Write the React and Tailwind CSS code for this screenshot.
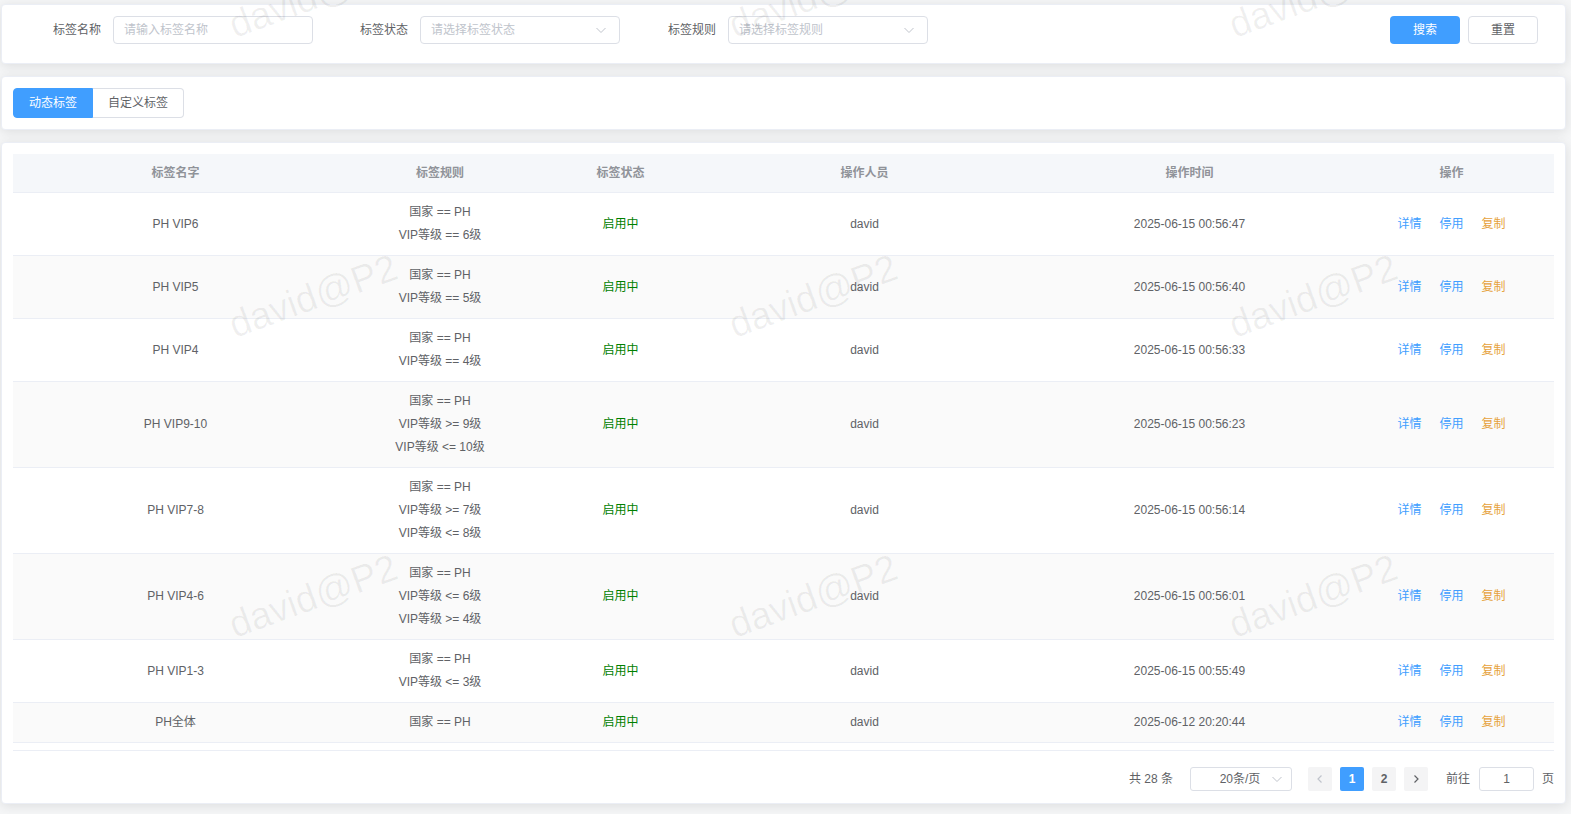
import { useState } from "react";

// =======================================================
// TAG LIST PAGE
// =======================================================

const rows = [
  { name: "PH VIP6", rules: ["国家 == PH", "VIP等级 == 6级"], time: "2025-06-15 00:56:47" },
  { name: "PH VIP5", rules: ["国家 == PH", "VIP等级 == 5级"], time: "2025-06-15 00:56:40" },
  { name: "PH VIP4", rules: ["国家 == PH", "VIP等级 == 4级"], time: "2025-06-15 00:56:33" },
  { name: "PH VIP9-10", rules: ["国家 == PH", "VIP等级 >= 9级", "VIP等级 <= 10级"], time: "2025-06-15 00:56:23" },
  { name: "PH VIP7-8", rules: ["国家 == PH", "VIP等级 >= 7级", "VIP等级 <= 8级"], time: "2025-06-15 00:56:14" },
  { name: "PH VIP4-6", rules: ["国家 == PH", "VIP等级 <= 6级", "VIP等级 >= 4级"], time: "2025-06-15 00:56:01" },
  { name: "PH VIP1-3", rules: ["国家 == PH", "VIP等级 <= 3级"], time: "2025-06-15 00:55:49" },
  { name: "PH全体", rules: ["国家 == PH"], time: "2025-06-12 20:20:44" },
];

const cols = "grid grid-cols-[325px_204px_157px_331px_319px_1fr]";

function ChevronDown({ className = "" }) {
  return (
    <svg width="12" height="12" viewBox="0 0 12 12" className={className} fill="none">
      <path d="M1.5 4 L6 8.5 L10.5 4" stroke="currentColor" strokeWidth="1" />
    </svg>
  );
}

function ChevronSide({ left, className = "" }) {
  return (
    <svg width="10" height="10" viewBox="0 0 10 10" className={className} fill="none">
      <path d={left ? "M6.5 1.5 L3 5 L6.5 8.5" : "M3.5 1.5 L7 5 L3.5 8.5"} stroke="currentColor" strokeWidth="1.2" />
    </svg>
  );
}

function Card({ className = "", children }) {
  return (
    <div className={"bg-white border border-[#ebeef5] rounded-[4px] shadow-[0_2px_12px_0_rgba(0,0,0,0.1)] " + className}>
      {children}
    </div>
  );
}

function Watermark() {
  const marks = [];
  [-4, 296, 596].forEach((y) => {
    [313, 813, 1313].forEach((x) => marks.push({ x, y }));
  });
  return (
    <div className="absolute inset-0 overflow-hidden pointer-events-none z-10">
      {marks.map((m, i) => (
        <div
          key={i}
          className="absolute -translate-x-1/2 -translate-y-1/2 -rotate-[20deg] text-[38px] leading-none whitespace-nowrap text-[rgba(0,0,0,0.06)]"
          style={{ left: m.x, top: m.y }}
        >
          david@P2
        </div>
      ))}
    </div>
  );
}

export default function App() {
  const [tab, setTab] = useState("dynamic");

  return (
    <div className="relative min-h-screen bg-[#f5f6f7] font-['Liberation_Sans','Noto_Sans_CJK_SC',sans-serif] text-xs text-[#606266]">
      <div className="pt-1 pl-px pr-[5px] flex flex-col gap-3">
        {/* ===== FILTERS ===== */}
        <Card className="pl-[11px] pt-[11px] pb-[19px] flex items-center">
          <div className="flex items-center mr-[7px]">
            <label className="w-[100px] text-right pr-3">标签名称</label>
            <div className="w-[200px] h-7 border border-[#dcdfe6] rounded-[4px] px-[10px] flex items-center text-[#c0c4cc]">
              请输入标签名称
            </div>
          </div>
          <div className="flex items-center mr-[8px]">
            <label className="w-[100px] text-right pr-3">标签状态</label>
            <div className="w-[200px] h-7 border border-[#dcdfe6] rounded-[4px] pl-[10px] pr-[12px] flex items-center justify-between text-[#c0c4cc]">
              <span>请选择标签状态</span>
              <ChevronDown />
            </div>
          </div>
          <div className="flex items-center">
            <label className="w-[100px] text-right pr-3">标签规则</label>
            <div className="w-[200px] h-7 border border-[#dcdfe6] rounded-[4px] pl-[10px] pr-[12px] flex items-center justify-between text-[#c0c4cc]">
              <span>请选择标签规则</span>
              <ChevronDown />
            </div>
          </div>
          <div className="ml-auto mr-[27px] flex gap-2">
            <button className="w-[70px] h-7 rounded-[4px] bg-[#409eff] text-white">搜索</button>
            <button className="w-[70px] h-7 rounded-[4px] bg-white border border-[#dcdfe6] text-[#606266]">重置</button>
          </div>
        </Card>

        {/* ===== TABS ===== */}
        <Card className="pl-[11px] py-[11px] flex">
          <button
            onClick={() => setTab("dynamic")}
            className={
              tab === "dynamic"
                ? "h-[30px] px-[15px] rounded-l-[4px] border border-[#409eff] bg-[#409eff] text-white"
                : "h-[30px] px-[15px] rounded-l-[4px] border border-[#dcdfe6] bg-white text-[#606266]"
            }
          >
            动态标签
          </button>
          <button
            onClick={() => setTab("custom")}
            className={
              tab === "custom"
                ? "h-[30px] px-[15px] rounded-r-[4px] border border-[#409eff] bg-[#409eff] text-white"
                : "h-[30px] px-[15px] rounded-r-[4px] border border-l-0 border-[#dcdfe6] bg-white text-[#606266]"
            }
          >
            自定义标签
          </button>
        </Card>

        {/* ===== TABLE ===== */}
        <Card className="px-[11px] pt-[11px] pb-[12px]">
          <div className="border-b border-[#ebeef5]">
            <div className={cols + " h-[39px] bg-[#f5f7fa] border-b border-[#ebeef5] font-bold text-[#909399] text-center items-center"}>
              <div>标签名字</div>
              <div>标签规则</div>
              <div>标签状态</div>
              <div>操作人员</div>
              <div>操作时间</div>
              <div>操作</div>
            </div>
            <div className="h-[557px] overflow-hidden">
              {rows.map((r, i) => (
                <div
                  key={r.name}
                  className={cols + " py-2 border-b border-[#ebeef5] text-center items-center leading-[23px] " + (i % 2 === 1 ? "bg-[#fafafa]" : "bg-white")}
                >
                  <div>{r.name}</div>
                  <div>
                    {r.rules.map((rule) => (
                      <div key={rule}>{rule}</div>
                    ))}
                  </div>
                  <div className="text-[#008000]">启用中</div>
                  <div>david</div>
                  <div>{r.time}</div>
                  <div className="flex justify-center gap-[18px]">
                    <span className="text-[#409eff] cursor-pointer">详情</span>
                    <span className="text-[#409eff] cursor-pointer">停用</span>
                    <span className="text-[#e6a23c] cursor-pointer">复制</span>
                  </div>
                </div>
              ))}
            </div>
          </div>

          {/* ===== PAGINATION ===== */}
          <div className="mt-[16px] h-6 flex items-center justify-end">
            <span className="mr-[17px]">共 28 条</span>
            <div className="w-[102px] h-6 border border-[#dcdfe6] rounded-[3px] flex items-center pl-[18px] pr-[8px] mr-[16px]">
              <span className="flex-1 text-center">20条/页</span>
              <ChevronDown className="text-[#c0c4cc]" />
            </div>
            <div className="flex gap-2 font-bold">
              <button className="w-6 h-6 rounded-[2px] bg-[#f4f4f5] text-[#c0c4cc] flex items-center justify-center">
                <ChevronSide left />
              </button>
              <button className="w-6 h-6 rounded-[2px] bg-[#409eff] text-white">1</button>
              <button className="w-6 h-6 rounded-[2px] bg-[#f4f4f5] text-[#606266]">2</button>
              <button className="w-6 h-6 rounded-[2px] bg-[#f4f4f5] text-[#606266] flex items-center justify-center">
                <ChevronSide />
              </button>
            </div>
            <span className="ml-[18px] mr-[9px]">前往</span>
            <div className="w-[55px] h-6 border border-[#dcdfe6] rounded-[3px] flex items-center justify-center">1</div>
            <span className="ml-[8px]">页</span>
          </div>
        </Card>
      </div>

      <Watermark />
    </div>
  );
}
